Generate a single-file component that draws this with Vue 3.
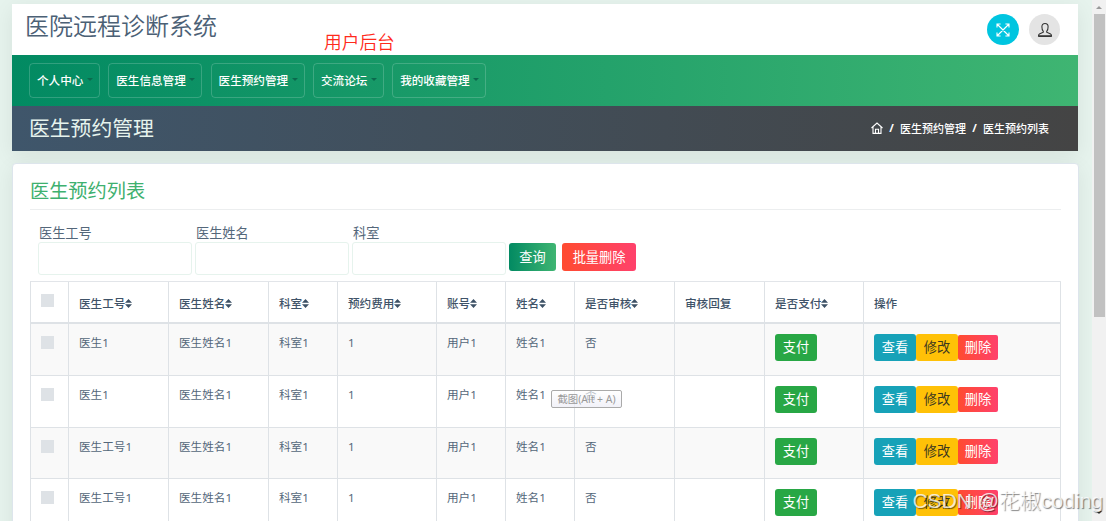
<script setup>
const menus = ['个人中心', '医生信息管理', '医生预约管理', '交流论坛', '我的收藏管理']
const fields = ['医生工号', '医生姓名', '科室']
const columns = [
  { label: '医生工号', sort: true },
  { label: '医生姓名', sort: true },
  { label: '科室', sort: true },
  { label: '预约费用', sort: true },
  { label: '账号', sort: true },
  { label: '姓名', sort: true },
  { label: '是否审核', sort: true },
  { label: '审核回复', sort: false },
  { label: '是否支付', sort: true },
  { label: '操作', sort: false }
]
const rest = ['医生姓名1', '科室1', '1', '用户1', '姓名1', '否', '']
const rows = ['医生1', '医生1', '医生工号1', '医生工号1'].map((id) => [id, ...rest])
</script>

<template>
  <div class="page">
    <div class="shell">
      <header class="top">
        <h1>医院远程诊断系统</h1>
        <span class="note">用户后台</span>
        <div class="round cyan">
          <svg width="14" height="14" viewBox="0 0 14 14" fill="none" stroke="#fff" stroke-width="1.1">
            <path d="M1 4.6V1h3.6M9.4 1H13v3.6M13 9.4V13H9.4M4.6 13H1V9.4M1 1l12 12M13 1L1 13" />
          </svg>
        </div>
        <div class="round grey">
          <svg width="16" height="16" viewBox="0 0 16 16" fill="none" stroke="#333" stroke-width="1.1">
            <path d="M6.300 10.200V9.400C5.200 8.400 4.900 6.500 4.900 4.700C4.900 2.600 6 1.500 8 1.500s3.100 1.100 3.100 3.200c0 1.800-.3 3.700-1.400 4.700v.8l3.900 1.800c.6.300.9.900.9 2H1.500c0-1.100.3-1.700.9-2z" />
            <path d="M1.300 14.200h13.400" stroke-width="1.500" />
          </svg>
        </div>
      </header>
      <nav class="nav">
        <a v-for="m in menus" :key="m" class="menu"><span>{{ m }}</span><i class="caret"></i></a>
      </nav>
      <section class="crumbbar">
        <h2>医生预约管理</h2>
        <div class="crumbs">
          <svg width="12" height="12" viewBox="0 0 12 12" fill="none" stroke="#fff" stroke-width="1.1">
            <path d="M.5 6L6 1l5.500 5M2 5v6.400h8V5M4.500 11V7.200h3V11" />
          </svg>
          <b>/</b><span>医生预约管理</span><b>/</b><span>医生预约列表</span>
        </div>
      </section>
    </div>

    <main class="card">
      <h3>医生预约列表</h3>
      <div class="search">
        <label v-for="f in fields" :key="f"><span>{{ f }}</span><input type="text" /></label>
        <button class="btn query">查询</button>
        <button class="btn danger batch">批量删除</button>
      </div>
      <table>
        <colgroup>
          <col class="w38" /><col class="w100" /><col class="w100" /><col class="w69" /><col class="w99" /><col class="w69" />
          <col class="w69" /><col class="w100" /><col class="w90" /><col class="w99" /><col />
        </colgroup>
        <thead>
          <tr>
            <th><i class="check"></i></th>
            <th v-for="c in columns" :key="c.label">
              <span class="head">{{ c.label }}<svg v-if="c.sort" width="7" height="9" viewBox="0 0 7 9" fill="#3d5166"><path d="M3.500 0L7 3.800H0zM0 5.200h7L3.500 9z" /></svg></span>
            </th>
          </tr>
        </thead>
        <tbody>
          <tr v-for="(r, i) in rows" :key="i">
            <td><i class="check"></i></td>
            <td v-for="(v, j) in r" :key="j">{{ v }}</td>
            <td class="acts"><div class="group"><button class="btn pay">支付</button></div></td>
            <td class="acts">
              <div class="group">
                <button class="btn view">查看</button>
                <button class="btn edit">修改</button>
                <button class="btn danger del">删除</button>
              </div>
            </td>
          </tr>
        </tbody>
      </table>
    </main>

    <div class="tip">截图(Alt + A)</div>
    <div class="scroll">
      <i class="up"></i>
      <i class="thumb"></i>
      <i class="down"></i>
    </div>
    <div class="mark">CSDN @花椒coding</div>
  </div>
</template>

<style>
body {
  overflow: hidden;
}
</style>

<style scoped>
* {
  box-sizing: border-box;
}
.page {
  position: relative;
  width: 1106px;
  height: 521px;
  overflow: hidden;
  padding: 4px 28px 0 12px;
  background: #e6f3ed;
  color: #54677a;
  font-family: "Noto Sans", "Noto Sans CJK SC", sans-serif;
  font-size: 11.6px;
  font-weight: 400;
}
h1, h2, h3 {
  margin: 0;
  font-weight: 400;
}
.shell {
  height: 147px;
  box-shadow: 0 5px 20px rgba(0, 0, 0, 0.07);
}
.top {
  position: relative;
  height: 51px;
  display: flex;
  align-items: center;
  gap: 10px;
  padding: 0 18px 0 13px;
  background: #fff;
}
h1 {
  flex: 1;
  font-size: 24px;
  line-height: 34px;
  margin-top: -7px;
  color: #4b6075;
  font-weight: 350;
}
.note {
  position: absolute;
  left: 312px;
  top: 26px;
  font-size: 17.7px;
  line-height: 24px;
  font-weight: 350;
  color: #ff2a1c;
}
.round {
  display: flex;
  align-items: center;
  justify-content: center;
  width: 31px;
  height: 31px;
  border-radius: 50%;
}
.cyan {
  width: 32px;
  background: #00c5e0;
}
.grey {
  background: #e4e4e4;
}
.nav {
  height: 51px;
  display: flex;
  gap: 8.3px;
  padding: 8px 17px;
  background: linear-gradient(90deg, #028a62, #3fb572);
}
.menu {
  height: 35px;
  display: flex;
  align-items: center;
  padding: 0 6px 2px 7px;
  border: 1px solid rgba(255, 255, 255, 0.18);
  border-radius: 4px;
  color: #fff;
  font-weight: 500;
  white-space: nowrap;
}
.caret {
  margin: 0 0 0 3.500px;
  border: 3px solid transparent;
  border-top-color: #0b6a4e;
  border-bottom: 0;
}
.crumbbar {
  height: 45px;
  display: flex;
  align-items: center;
  justify-content: space-between;
  padding: 0 29px 2px 17px;
  background: linear-gradient(90deg, #3f566b, #444);
  color: #fff;
}
h2 {
  font-size: 20.8px;
  line-height: 30px;
  color: #e6f3ed;
}
.crumbs {
  display: flex;
  align-items: center;
  font-size: 11px;
  font-weight: 500;
}
.crumbs b {
  width: 17px;
  text-align: center;
}
.card {
  height: 380px;
  margin-top: 12px;
  padding: 0 17px;
  margin-right: -1px;
  background: #fff;
  border: 1px solid #dde5ec;
  border-radius: 4px;
  box-shadow: 0 5px 20px rgba(0, 0, 0, 0.07);
}
h3 {
  height: 46px;
  padding-top: 13px;
  border-bottom: 1px solid #eceeef;
  font-size: 19.2px;
  line-height: 28px;
  color: #3eb06f;
}
.search {
  height: 71px;
  display: flex;
  align-items: flex-start;
  padding: 14px 0 0 8px;
}
label {
  width: 153px;
  margin-right: 4px;
  font-size: 13.2px;
  line-height: 18px;
}
label span {
  padding-left: 1px;
}
input {
  display: block;
  width: 154px;
  height: 33px;
  border: 1px solid #e6f3ed;
  border-radius: 3px;
  background: #fff;
}
.btn {
  border: 0;
  padding: 0 0 1px;
  border-radius: 3px;
  font: 400 13.2px/26px "Noto Sans CJK SC", sans-serif;
  color: #fff;
  white-space: nowrap;
}
.query {
  width: 47px;
  height: 28px;
  margin: 19px 6px 0 0;
  background: linear-gradient(90deg, #028a62, #3fb572);
}
.danger {
  background: linear-gradient(90deg, #ff4b30, #ff416c);
}
.batch {
  width: 74px;
  height: 28px;
  margin-top: 19px;
}
table {
  width: 1031px;
  table-layout: fixed;
  border-collapse: separate;
  border-spacing: 0;
  border-top: 1px solid #e2e5e9;
  border-left: 1px solid #dee2e6;
}
.w38 { width: 38px; }
.w69 { width: 69px; }
.w90 { width: 90px; }
.w99 { width: 99px; }
.w100 { width: 100px; }
th, td {
  padding: 10px 0 0 10px;
  border-right: 1px solid #dee2e6;
  border-bottom: 1px solid #dee2e6;
  text-align: left;
  vertical-align: top;
  line-height: 17px;
  white-space: nowrap;
}
th {
  height: 42px;
  padding-top: 13px;
  border-bottom-width: 2px;
  color: #3f5368;
  font-weight: 500;
}
td {
  height: 52px;
}
tbody tr:nth-child(3) td {
  height: 51px;
}
tbody tr:nth-child(odd) td {
  background: #f9f9f9;
}
.head {
  display: flex;
  align-items: center;
}
.check {
  display: block;
  width: 13px;
  height: 13px;
  background: #dee2e6;
}
th .check {
  margin-top: -1px;
}
td .check {
  margin-top: 2px;
}
td.acts {
  padding-top: 10px;
}
.group {
  display: flex;
  align-items: center;
}
.pay, .view, .edit {
  width: 42px;
  height: 27px;
}
.pay {
  background: #28a745;
}
.view {
  background: #17a2b8;
}
.edit {
  background: #ffc107;
  color: #3d3820;
}
.del {
  width: 40px;
  height: 25px;
  border-radius: 2px;
  line-height: 24px;
}
.tip {
  position: absolute;
  left: 551px;
  top: 390px;
  width: 71px;
  height: 18px;
  border: 1px solid #aaa;
  border-radius: 2px;
  background: linear-gradient(rgba(255, 255, 255, 0.6), rgba(236, 236, 246, 0.7));
  color: #999;
  font-size: 10.4px;
  line-height: 16px;
  text-align: center;
  white-space: nowrap;
}
.scroll {
  position: absolute;
  right: 0;
  top: 0;
  width: 14px;
  height: 521px;
  display: flex;
  flex-direction: column;
  align-items: center;
  background: #f1f1f1;
}
.up {
  margin: 6px 0 5px;
  border: 3px solid transparent;
  border-bottom-color: #999;
  border-top: 0;
}
.thumb {
  width: 11px;
  height: 303px;
  background: #c1c1c1;
}
.down {
  margin-top: 194px;
  border: 3px solid transparent;
  border-top-color: #444;
  border-bottom: 0;
}
.mark {
  position: absolute;
  right: 3px;
  top: 487px;
  font-family: "Liberation Sans", "Noto Sans CJK SC", sans-serif;
  font-size: 21px;
  font-weight: 300;
  line-height: 28px;
  color: rgba(255, 255, 255, 0.8);
  text-shadow: 1px 1px 1px rgba(0, 0, 0, 0.5);
  white-space: nowrap;
}
</style>
